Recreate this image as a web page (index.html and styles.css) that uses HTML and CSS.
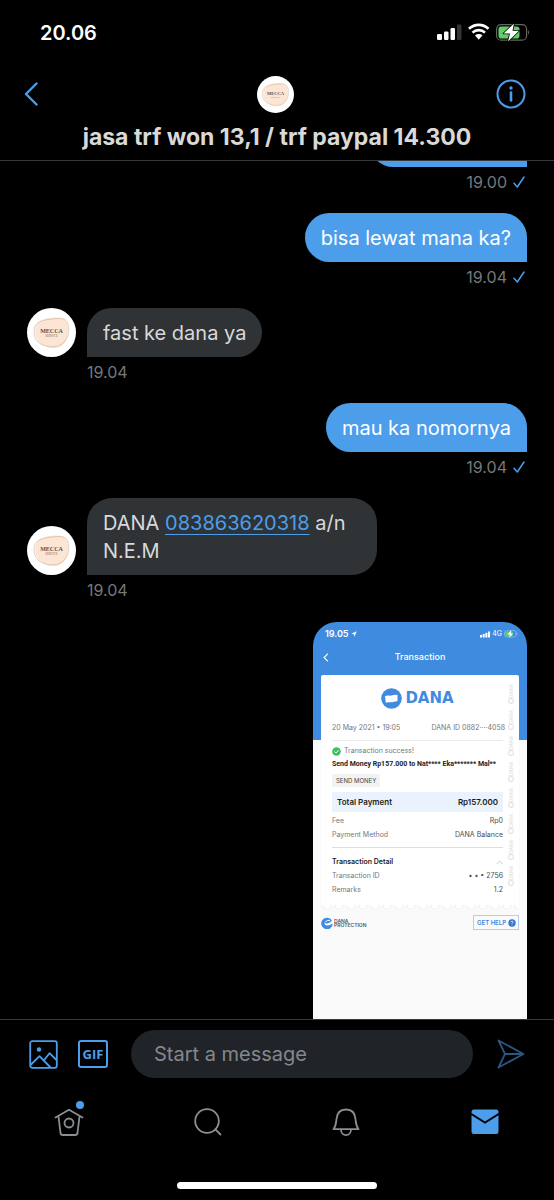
FILE: index.html
```html
<!DOCTYPE html>
<html lang="id">
<head>
<meta charset="utf-8">
<meta name="viewport" content="width=device-width, initial-scale=1">
<title>Messages</title>
<link rel="stylesheet" href="styles.css">
</head>
<body>
<svg class="defs" aria-hidden="true">
  <symbol id="avatar" viewBox="0 0 49 49">
    <circle cx="24.500" cy="24.500" r="24.500" fill="#fff"/>
    <path d="M9 18C12 11 22 9 32 9.500C39 10 41 15 41 23C41 33 36 40 27 40C16 40 5 32 9 18Z" fill="#fce5d3"/>
    <path d="M7 23C7 14 15 12 25 11C35 10 39 10 41 16C43 24 41 31 35 36C28 41 17 39 11 34C8 31 7 27 7 23Z" fill="none" stroke="#c4b0a2" stroke-width=".6"/>
    <text x="24.500" y="24.500" class="avatar-name">MECCA</text>
    <text x="24.500" y="28.500" class="avatar-sub">SERVICE</text>
  </symbol>
  <symbol id="check" viewBox="0 0 12 12"><path d="M1 7.200L4.300 11L11 1" fill="none" stroke="#4c9eeb" stroke-width="1.500" stroke-linecap="round" stroke-linejoin="round"/></symbol>
</svg>

<div class="app">
  <header class="header">
    <div class="status">
      <span class="clock">20.06</span>
      <svg class="status-icons" width="94" height="20" viewBox="0 0 94 20" role="img" aria-label="Signal, Wi-Fi, battery charging">
        <g fill="#fff"><rect x="1" y="11" width="5" height="6" rx="1.200"/><rect x="8" y="8.500" width="4.500" height="8.500" rx="1.200"/><rect x="14.500" y="5" width="4.500" height="12" rx="1.200"/></g>
        <rect x="21" y="1.500" width="4.500" height="15.500" rx="1.200" fill="#353535"/>
        <g fill="none" stroke="#fff" stroke-width="2.600"><path d="M33 5.800C38.500.6 47 .6 52.500 5.800"/><path d="M36.500 9.600C40 6.300 45.500 6.300 49 9.600"/></g>
        <path d="M39 12.300C41.300 10.400 44.200 10.400 46.500 12.300L42.750 16.700Z" fill="#fff"/>
        <rect x="60.600" y="1.600" width="30" height="15.600" rx="4.500" fill="none" stroke="#666" stroke-width="1.200"/>
        <path d="M92 7Q94 9.400 92 11.800Z" fill="#666"/>
        <rect x="62.500" y="3.500" width="21" height="12" rx="2.800" fill="#63ce68"/>
        <path d="M78 .5L67.500 10.500H74L72 18.500L83 7.800H76.500Z" fill="#fff" stroke="#000" stroke-width="1.600" stroke-linejoin="round" paint-order="stroke"/>
      </svg>
    </div>
    <div class="nav">
      <button class="icon-btn" aria-label="Back"><svg width="14" height="24" viewBox="0 0 14 24" fill="none" stroke="#4c9eeb" stroke-width="2.400" stroke-linecap="round" stroke-linejoin="round"><path d="M12.500 1.500L2 12L12.500 22.500"/></svg></button>
      <svg class="nav-avatar" role="img" aria-label="MECCA service"><use href="#avatar"/></svg>
      <button class="icon-btn" aria-label="Conversation info"><svg width="30" height="30" viewBox="0 0 30 30" fill="none" stroke="#4c9eeb"><circle cx="15" cy="15" r="13.500" stroke-width="2"/><path d="M15 13.500V21.500" stroke-width="2.600" stroke-linecap="round"/><circle cx="15" cy="9" r="1.700" fill="#4c9eeb" stroke="none"/></svg></button>
    </div>
    <h1 class="title">jasa trf won 13,1 / trf paypal 14.300</h1>
  </header>

  <main class="thread">
    <article class="message sent">
      <div class="peek"><div class="bubble"></div></div>
      <div class="meta"><time>19.00</time><svg class="check"><use href="#check"/></svg></div>
    </article>
    <article class="message sent">
      <p class="bubble">bisa lewat mana ka?</p>
      <div class="meta"><time>19.04</time><svg class="check"><use href="#check"/></svg></div>
    </article>
    <article class="message received">
      <svg class="avatar" role="img" aria-label="MECCA service"><use href="#avatar"/></svg>
      <p class="bubble">fast ke dana ya</p>
      <div class="meta"><time>19.04</time></div>
    </article>
    <article class="message sent">
      <p class="bubble">mau ka nomornya</p>
      <div class="meta"><time>19.04</time><svg class="check"><use href="#check"/></svg></div>
    </article>
    <article class="message received">
      <svg class="avatar" role="img" aria-label="MECCA service"><use href="#avatar"/></svg>
      <p class="bubble">DANA <a href="tel:083863620318">083863620318</a> a/n N.E.M</p>
      <div class="meta"><time>19.04</time></div>
    </article>
    <article class="message sent">
      <section class="receipt">
        <div class="receipt-top">
          <div class="receipt-status">
            <span>19.05</span>
            <svg width="6" height="6" viewBox="0 0 6 6"><path d="M.3 2.800L5.800.3L3.300 5.800L2.900 3.200Z" fill="#fff"/></svg>
            <svg class="push" width="10" height="7" viewBox="0 0 10 7" fill="#fff"><rect y="4" width="2" height="2.500"/><rect x="2.700" y="3" width="2" height="3.500"/><rect x="5.400" y="1.800" width="2" height="4.700"/><rect x="8" y=".5" width="2" height="6"/></svg>
            <span class="net">4G</span>
            <svg width="14" height="8" viewBox="0 0 14 8"><rect x=".5" y=".7" width="11.500" height="6.300" rx="1.800" fill="none" stroke="#8fbdf0" stroke-width=".7"/><rect x="1.200" y="1.400" width="7.500" height="5" rx="1" fill="#5cd06c"/><path d="M7.300 0L3.500 4.400H6L5 8L9.200 3.400H6.700Z" fill="#fff"/><path d="M12.800 2.800V5" stroke="#8fbdf0"/></svg>
          </div>
          <div class="receipt-nav">
            <svg width="6" height="9" viewBox="0 0 6 9" fill="none" stroke="#fff" stroke-width="1.100"><path d="M5 .7L1 4.500L5 8.300"/></svg>
            <h2>Transaction</h2>
          </div>
        </div>
        <div class="slip">
          <div class="slip-main">
            <div class="brand">
              <svg width="21" height="21" viewBox="0 0 21 21"><circle cx="10.500" cy="10.500" r="10.300" fill="#3f8be0"/><path d="M4 8.200C6.500 6.800 9 8.300 11.500 7.300Q14 6.300 16.500 7V13.300C14 12.800 12 14.600 9 14.300Q6 13.800 4.800 14.800Z" fill="#fff"/></svg>
              <span>DANA</span>
            </div>
            <div class="row stamp"><span>20 May 2021 • 19:05</span><span class="wide">DANA ID 0882····4058</span></div>
            <hr>
            <div class="success"><svg width="9" height="9" viewBox="0 0 9 9"><circle cx="4.500" cy="4.500" r="4.300" fill="#3ec063"/><path d="M2.500 4.600L4 6L6.600 3.200" fill="none" stroke="#fff"/></svg><span>Transaction success!</span></div>
            <p class="summary">Send Money Rp157.000 to Nat**** Eka******* Mal**</p>
            <span class="tag">SEND MONEY</span>
            <div class="row total"><span>Total Payment</span><span>Rp157.000</span></div>
            <div class="row"><span>Fee</span><b>Rp0</b></div>
            <div class="row"><span>Payment Method</span><b>DANA Balance</b></div>
            <hr class="wide-rule">
            <div class="row detail"><h3>Transaction Detail</h3><svg width="7" height="5" viewBox="0 0 7 5"><path d="M.8 4L3.500 1L6.200 4" fill="none" stroke="#c8c8c8"/></svg></div>
            <div class="row"><span>Transaction ID</span><b>• • • 2756</b></div>
            <div class="row"><span>Remarks</span><b>1.2</b></div>
          </div>
          <div class="watermark" aria-hidden="true">
            <span>DANA</span><i></i><span>DANA</span><i></i><span>DANA</span><i></i><span>DANA</span><i></i><span>DANA</span><i></i><span>DANA</span><i></i><span>DANA</span><i></i><span>DANA</span><i></i>
          </div>
        </div>
        <div class="wave"></div>
        <div class="receipt-foot">
          <svg width="12" height="12" viewBox="0 0 12 12"><path d="M11 3.500A5.800 5.800 0 1 0 11.800 6.500Q8 9 5.500 8.500Q3 7.500 3.500 5.500Q5 7 7 6.300Q9.500 5.500 11 3.500Z" fill="#3f8be0"/><path d="M4.500 4.800Q6.500 3 9 3.300" fill="none" stroke="#fff"/></svg>
          <strong>DANA<br>PROTECTION</strong>
          <button class="help">GET HELP <svg width="8" height="8" viewBox="0 0 8 8"><circle cx="4" cy="4" r="3.700" fill="#3474cf"/><path d="M2.900 3.200Q3 2 4.100 2Q5.200 2.200 5 3.200Q4.800 3.800 4 4.200V4.800M4 5.500V6.200" fill="none" stroke="#fff" stroke-width=".7"/></svg></button>
        </div>
      </section>
    </article>
  </main>

  <form class="composer">
    <button type="button" class="icon-btn" aria-label="Add photo"><svg width="29" height="29" viewBox="0 0 29 29" fill="none" stroke="#4c9eeb" stroke-width="1.800" stroke-linejoin="round"><rect x="1.200" y="1.200" width="26.600" height="26.600" rx="2"/><path d="M1.500 25L10.500 16.200L21.500 27.500M14.800 20.500L20.500 13.200L27.500 20"/><circle cx="10" cy="9.500" r="2.200" fill="#4c9eeb" stroke="none"/></svg></button>
    <button type="button" class="gif">GIF</button>
    <input class="field" type="text" placeholder="Start a message" aria-label="Start a message">
    <button type="submit" class="icon-btn send" aria-label="Send"><svg width="28" height="30" viewBox="0 0 28 30" fill="none" stroke="#2a5680" stroke-width="1.800" stroke-linejoin="round"><path d="M1.500 1.500L26.500 15L1.500 28.500L8 15ZM8 15H26"/></svg></button>
  </form>

  <nav class="tabs">
    <a href="#home" class="tab" aria-label="Home"><svg width="30" height="30" viewBox="0 0 30 30" fill="none" stroke="#8b8e93" stroke-width="1.800" stroke-linecap="round" stroke-linejoin="round"><path d="M1.500 10.500L15 2.800L28.500 10.500M4.500 9.500L6.500 26Q6.800 28 8.800 28H21.200Q23.200 28 23.500 26L25.500 9.500"/><circle cx="15" cy="16" r="4.500"/></svg><span class="dot"></span></a>
    <a href="#search" class="tab" aria-label="Search"><svg width="30" height="30" viewBox="0 0 30 30" fill="none" stroke="#8b8e93" stroke-width="1.800" stroke-linecap="round"><circle cx="14" cy="14" r="11.800"/><path d="M22.400 22.400L27.500 27.500"/></svg></a>
    <a href="#notifications" class="tab" aria-label="Notifications"><svg width="30" height="30" viewBox="0 0 30 30" fill="none" stroke="#8b8e93" stroke-width="1.800" stroke-linecap="round" stroke-linejoin="round"><path d="M2.500 22.200C5 19 5 16 5.500 12C6 6 9.500 2.500 15 2.500S24 6 24.500 12C25 16 25 19 27.500 22.200ZM10 22.500C10 30 20 30 20 22.500"/></svg></a>
    <a href="#messages" class="tab" aria-label="Messages"><svg width="28" height="26" viewBox="0 0 28 26"><path d="M.5 4V3Q.5.500 3 .5H25Q27.500.5 27.500 3V4L14 12.500Z" fill="#4c9eeb"/><path d="M.5 6.200L14 14.700L27.500 6.200V22.500Q27.500 25 25 25H3Q.5 25 .5 22.500Z" fill="#4c9eeb"/></svg></a>
  </nav>
  <div class="home-bar"></div>
</div>
</body>
</html>
```

FILE: styles.css
```css
* { box-sizing: border-box; }
body { margin: 0; background: #000; color: #d9d9d9; font-family: Inter, "Liberation Sans", sans-serif; }
button { padding: 0; border: 0; background: none; font: inherit; color: inherit; }
h1, h2, h3, p { margin: 0; }
svg { display: block; flex: none; }
.defs { display: none; }
.app { display: flex; flex-direction: column; height: 100vh; overflow: hidden; }

.header { flex: none; border-bottom: 1px solid #38393b; }
.status { display: flex; justify-content: space-between; align-items: center; padding: 22px 24px 0 40px; height: 44px; }
.clock { color: #fff; font-size: 20px; font-weight: 600; line-height: 24px; }
.nav { display: grid; grid-template-columns: 1fr auto 1fr; align-items: center; padding: 24px 28px 0 24px; height: 76px; }
.nav .icon-btn:last-child { justify-self: end; }
.nav .icon-btn:first-child { justify-self: start; }
.nav-avatar { width: 37px; height: 37px; }
.title { padding: 2px 16px 8px; font-size: 23px; font-weight: 700; line-height: 30px; text-align: center; }
.avatar-name { font: 6px "Liberation Serif", serif; font-weight: 700; fill: #5c5150; text-anchor: middle; }
.avatar-sub { font: 3px "Liberation Serif", serif; fill: #7d6c65; text-anchor: middle; }

.thread { flex: 1; min-height: 0; overflow: hidden; padding: 0 27px; }
.message { display: grid; grid-template-columns: 49px 1fr; column-gap: 11px; align-items: end; }
.bubble { grid-column: 2; padding: 11px 16px 10px; border-radius: 25px; font-size: 20px; line-height: 28px; }
.sent .bubble { justify-self: end; color: #fff; background: #4c9eeb; border-bottom-right-radius: 0; }
.received .bubble { justify-self: start; max-width: 290px; background: #2f3336; border-bottom-left-radius: 0; }
.bubble a { color: #4c9eeb; text-decoration: underline; text-underline-offset: 4px; text-decoration-thickness: 1px; }
.avatar { width: 49px; height: 49px; }
.peek { grid-column: 2; display: flex; justify-content: flex-end; align-items: flex-end; height: 6px; }
.peek .bubble { flex: none; width: 158px; height: 49px; }
.meta { grid-column: 2; display: flex; align-items: center; gap: 6px; padding: 5px 0 21px; color: #75787c; font-size: 16px; line-height: 20px; }
.sent .meta { justify-content: flex-end; padding-right: 2px; }
.check { width: 12px; height: 12px; }

.receipt { grid-column: 2; justify-self: end; width: 214px; height: 460px; margin-top: 1px; overflow: hidden; border-radius: 24px; background: linear-gradient(#3f8be0 118px, #fafafa 118px); color: #76777a; font-size: 7px; line-height: 14px; }
.receipt-status { display: flex; align-items: center; gap: 2px; padding: 5px 9px 0 12px; color: #fff; font-size: 9px; font-weight: 600; }
.push { margin-left: auto; }
.net { font-size: 7px; font-weight: 400; }
.receipt-nav { display: grid; grid-template-columns: 6px 1fr 6px; align-items: center; padding: 9px 10px 11px; color: #fff; }
.receipt-nav h2 { font-size: 9px; font-weight: 500; line-height: 14px; text-align: center; }
.slip { display: flex; margin: 0 8px; padding: 0 0 8px 11px; border-radius: 2px 2px 0 0; background: #fff; }
.slip-main { flex: 1; min-width: 0; }
.brand { display: flex; justify-content: center; align-items: center; gap: 3px; padding: 13px 0 12px; color: #3f8be0; font: 700 15px/21px "DejaVu Sans", sans-serif; }
.row { display: flex; justify-content: space-between; align-items: center; white-space: nowrap; }
.row b { color: #4c4d50; font-weight: 400; }
.stamp { margin-right: -2px; }
.slip hr { margin: 5px 0 3px; border: 0; border-top: 1px solid #ececec; }
.success { display: flex; align-items: center; gap: 3px; }
.summary { color: #222; font: 700 7px/13px Roboto, "Liberation Sans", sans-serif; white-space: nowrap; }
.tag { display: block; width: max-content; margin: 3px 0 5px; padding: 0 4px; border-radius: 1px; background: #f2f2f3; color: #444; font-size: 6px; line-height: 13px; }
.total { margin-bottom: 2px; padding: 0 5px; background: #eaf2fd; color: #1c1d20; font-size: 8px; font-weight: 600; line-height: 20px; }
.slip .wide-rule { margin: 5px 0 7px; border-color: #dedede; }
.detail h3 { color: #222; font-size: 7px; font-weight: 600; line-height: 14px; }
.watermark { display: flex; flex-direction: column; align-items: center; width: 16px; padding-top: 8px; color: #dcdcdc; font-size: 5px; line-height: 6px; }
.watermark span { height: 15px; writing-mode: vertical-rl; transform: rotate(180deg); }
.watermark i { width: 6px; height: 6px; margin-bottom: 5px; border: 1px solid #dcdcdc; border-radius: 50%; }
.wave { height: 4px; margin: 0 8px; background: radial-gradient(circle at 6px 0, #fff 3px, #f0f0f0 4px, transparent 5px) 0 0 / 12px 4px repeat-x; }
.receipt-foot { display: flex; align-items: center; gap: 1px; margin: 6px 8px 0; }
.receipt-foot strong { flex: 1; color: #555; font-size: 5px; font-weight: 600; line-height: 4px; }
.help { display: flex; align-items: center; gap: 2px; height: 15px; padding: 0 2px 0 3px; border: 1px solid #b5cdf0; color: #4285dc; font-size: 6px; font-weight: 600; }

.composer { flex: none; display: flex; align-items: center; padding: 10px 29px; border-top: 1px solid #38393b; }
.gif { width: 30px; height: 28px; margin: 0 23px 0 20px; border: 2px solid #4c9eeb; border-radius: 3px; color: #4c9eeb; font: 700 13px/24px "Open Sans", sans-serif; }
.field { flex: 1; min-width: 0; height: 48px; padding: 0 23px; border: 0; border-radius: 24px; outline: 0; background: #202327; color: #d9d9d9; font: 20px/28px Inter, "Liberation Sans", sans-serif; }
.field::placeholder { color: #85888c; opacity: 1; }
.send { margin-left: 24px; }
.tabs { flex: none; display: grid; grid-template-columns: repeat(4, 1fr); height: 77px; padding-bottom: 9px; }
.tab { position: relative; justify-self: center; align-self: center; }
.dot { position: absolute; top: -6px; right: 0; width: 8px; height: 8px; border-radius: 50%; background: #4c9eeb; }
.home-bar { flex: none; width: 36%; height: 7px; margin: 17px auto 11px; border-radius: 4px; background: #fff; }
```
